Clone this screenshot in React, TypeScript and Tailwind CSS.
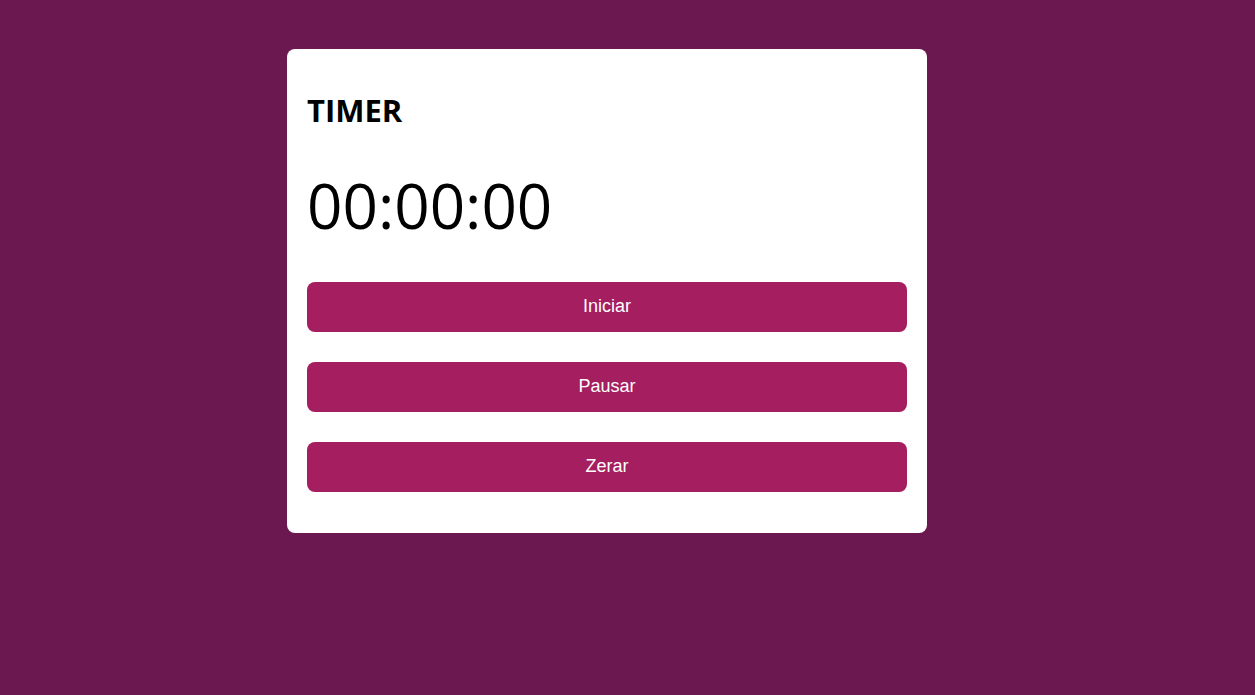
export default function App() {
  const buttons = ["Iniciar", "Pausar", "Zerar"];
  return (
    <main className="min-h-[695px] w-full bg-[#6c1850] pt-[49px]">
      <div className="ml-[287px] w-[640px] rounded-lg bg-white p-5 pb-[41px]">
        <h1 className="mt-[18px] text-[31px] font-bold text-black [font-family:'Open_Sans',sans-serif]">
          TIMER
        </h1>
        <p className="mt-[25px] text-[62px] text-black [font-family:'Open_Sans',sans-serif]">
          00:00:00
        </p>
        <div className="mt-[30px] flex flex-col gap-[30px]">
          {buttons.map((label) => (
            <button
              key={label}
              className="h-[50px] w-full rounded-lg bg-[#a51e5f] text-[18px] text-white [font-family:'Liberation_Sans',Arial,sans-serif]"
            >
              {label}
            </button>
          ))}
        </div>
      </div>
    </main>
  );
}
